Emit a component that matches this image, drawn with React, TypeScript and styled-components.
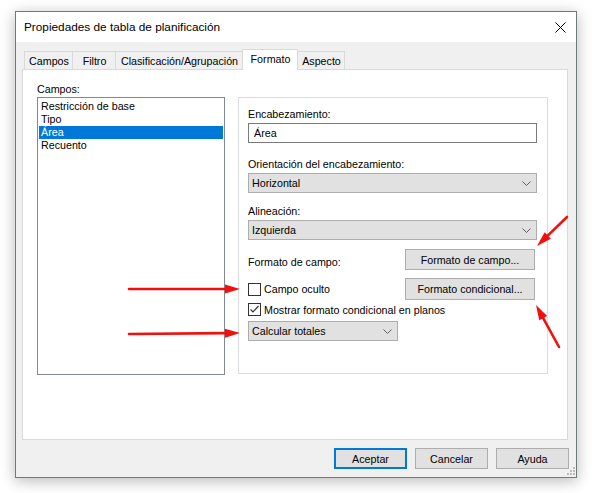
import styled, { createGlobalStyle } from "styled-components";

const GlobalStyle = createGlobalStyle`
  html, body {
    margin: 0;
    background: #ffffff;
  }
  body {
    font-family: "Liberation Sans", Arial, sans-serif;
    font-size: 10.7px;
    color: #000000;
  }
`;

const Page = styled.div`
  position: relative;
  width: 592px;
  height: 493px;
  padding: 11px 0 0 15px;
  box-sizing: border-box;
  overflow: hidden;
`;

const Window = styled.div`
  width: 562px;
  height: 467px;
  box-sizing: border-box;
  border: 1px solid #6f7a7a;
  background: #f0f0f0;
  box-shadow: 0 3px 14px rgba(0, 0, 0, 0.28);
  display: flex;
  flex-direction: column;
`;

const TitleBar = styled.div`
  height: 30px;
  background: #ffffff;
  display: flex;
  align-items: center;
  justify-content: space-between;
  padding: 0 10px 0 8px;
`;

const Title = styled.span`
  font-size: 11.8px;
`;

const TabBar = styled.div`
  height: 20px;
  margin: 7px 8px 0 6px;
  padding-left: 2px;
  display: flex;
  align-items: flex-end;
`;

const Tab = styled.div<{ $w: number; $active?: boolean }>`
  position: relative;
  width: ${(p) => p.$w}px;
  height: ${(p) => (p.$active ? 21 : 18)}px;
  box-sizing: border-box;
  margin-left: -1px;
  margin-bottom: ${(p) => (p.$active ? -1 : 0)}px;
  padding-bottom: ${(p) => (p.$active ? 2 : 0)}px;
  padding-left: 1px;
  border: 1px solid #d9d9d9;
  border-bottom: none;
  background: ${(p) => (p.$active ? "#ffffff" : "#f0f0f0")};
  z-index: ${(p) => (p.$active ? 1 : 0)};
  display: flex;
  align-items: center;
  justify-content: center;
  white-space: nowrap;

  &:first-child {
    margin-left: 0;
  }
`;

const Panel = styled.div`
  height: 371px;
  box-sizing: border-box;
  margin: 0 8px 0 6px;
  border: 1px solid #d9d9d9;
  background: #ffffff;
  padding: 11px 0 0 14px;
  display: grid;
  grid-template-columns: 188px 310px;
  grid-template-rows: 16px auto;
  column-gap: 13px;
`;

const Label = styled.div<{ $top?: number }>`
  line-height: 16px;
  margin-top: ${(p) => p.$top ?? 0}px;
  white-space: nowrap;
`;

const FieldList = styled.div`
  grid-column: 1;
  grid-row: 2;
  height: 278px;
  box-sizing: border-box;
  border: 1px solid #828790;
  padding: 2px 1px 1px;
`;

const ListItem = styled.div<{ $selected?: boolean }>`
  height: 13px;
  line-height: 13px;
  padding-left: 2px;
  background: ${(p) => (p.$selected ? "#0078d7" : "transparent")};
  color: ${(p) => (p.$selected ? "#ffffff" : "#000000")};
  white-space: nowrap;
`;

const GroupBox = styled.div`
  grid-column: 2;
  grid-row: 2;
  height: 277px;
  box-sizing: border-box;
  border: 1px solid #dcdcdc;
  padding: 8px 10px 0 9px;
  display: flex;
  flex-direction: column;
`;

const FieldLabel = styled(Label)`
  margin-bottom: 1px;
`;

const TextBox = styled.div`
  height: 20px;
  box-sizing: border-box;
  border: 1px solid #7a7a7a;
  padding-left: 5px;
  display: flex;
  align-items: center;
`;

const Select = styled.div<{ $w?: number }>`
  width: ${(p) => (p.$w ? `${p.$w}px` : "auto")};
  height: 20px;
  box-sizing: border-box;
  border: 1px solid #adadad;
  background: #e1e1e1;
  padding: 0 5px 0 3px;
  display: flex;
  align-items: center;
  justify-content: space-between;
`;

const Row = styled.div<{ $top: number; $h: number }>`
  height: ${(p) => p.$h}px;
  margin-top: ${(p) => p.$top}px;
  display: flex;
  align-items: center;
  justify-content: space-between;
`;

const RowLabel = styled.span`
  padding-top: 4px;
`;

const Button = styled.div<{ $w: number; $h?: number; $default?: boolean }>`
  width: ${(p) => p.$w}px;
  height: ${(p) => p.$h ?? 21}px;
  box-sizing: border-box;
  border: ${(p) => (p.$default ? "2px solid #0078d7" : "1px solid #adadad")};
  background: #e1e1e1;
  display: flex;
  align-items: center;
  justify-content: center;
  white-space: nowrap;
`;

const GroupButton = styled(Button)`
  margin-right: 2px;
`;

const CheckLine = styled.label<{ $top?: number }>`
  height: 13px;
  margin-top: ${(p) => p.$top ?? 0}px;
  display: flex;
  align-items: center;
  gap: 3px;
  white-space: nowrap;
`;

const CheckBox = styled.span`
  width: 13px;
  height: 13px;
  box-sizing: border-box;
  border: 1px solid #333333;
  background: #ffffff;
  display: flex;
  align-items: center;
  justify-content: center;
`;

const TotalsSelect = styled(Select)`
  margin-top: 5px;
`;

const Footer = styled.div`
  position: relative;
  margin-top: 8px;
  padding-right: 7px;
  display: flex;
  justify-content: flex-end;
  gap: 8px;
`;

const Grip = styled.svg`
  position: absolute;
  right: 1px;
  top: 19px;
`;

const Annotations = styled.svg`
  position: absolute;
  left: 0;
  top: 0;
  pointer-events: none;
`;

const Chevron = () => (
  <svg width="9" height="5" viewBox="0 0 9 5">
    <polyline points="0.5,0.5 4.5,4.5 8.5,0.5" fill="none" stroke="#606060" strokeWidth="1" />
  </svg>
);

const CloseIcon = () => (
  <svg width="11" height="11" viewBox="0 0 11 11">
    <path d="M0.5 0.5 L10.5 10.5 M10.5 0.5 L0.5 10.5" stroke="#000" strokeWidth="1" />
  </svg>
);

const CheckMark = () => (
  <svg width="11" height="11" viewBox="0 0 11 11">
    <polyline points="1.5,5.5 4,8 9.5,2" fill="none" stroke="#333" strokeWidth="1.2" />
  </svg>
);

// red arrow: shaft plus a filled head whose tip sits at (x2, y2)
const Arrow = ({ x1, y1, x2, y2 }: { x1: number; y1: number; x2: number; y2: number }) => {
  const a = Math.atan2(y2 - y1, x2 - x1);
  const len = 15;
  const half = 4.5;
  const bx = x2 - len * Math.cos(a);
  const by = y2 - len * Math.sin(a);
  const px = -Math.sin(a) * half;
  const py = Math.cos(a) * half;
  return (
    <g>
      <line x1={x1} y1={y1} x2={bx} y2={by} stroke="#f01010" strokeWidth="2.6" strokeLinecap="round" />
      <polygon points={`${x2},${y2} ${bx + px},${by + py} ${bx - px},${by - py}`} fill="#f01010" />
    </g>
  );
};

const tabs = [
  { label: "Campos", w: 49 },
  { label: "Filtro", w: 44 },
  { label: "Clasificación/Agrupación", w: 128 },
  { label: "Formato", w: 56, active: true },
  { label: "Aspecto", w: 48 },
];

const fields = ["Restricción de base", "Tipo", "Área", "Recuento"];

export default function App() {
  return (
    <>
      <GlobalStyle />
      <Page>
        <Window>
          <TitleBar>
            <Title>Propiedades de tabla de planificación</Title>
            <CloseIcon />
          </TitleBar>

          <TabBar>
            {tabs.map((t) => (
              <Tab key={t.label} $w={t.w} $active={t.active}>
                {t.label}
              </Tab>
            ))}
          </TabBar>

          <Panel>
            <Label>Campos:</Label>
            <FieldList>
              {fields.map((f) => (
                <ListItem key={f} $selected={f === "Área"}>
                  {f}
                </ListItem>
              ))}
            </FieldList>

            <GroupBox>
              <FieldLabel>Encabezamiento:</FieldLabel>
              <TextBox>Área</TextBox>

              <FieldLabel $top={13}>Orientación del encabezamiento:</FieldLabel>
              <Select>
                Horizontal
                <Chevron />
              </Select>

              <FieldLabel $top={10}>Alineación:</FieldLabel>
              <Select>
                Izquierda
                <Chevron />
              </Select>

              <Row $top={9} $h={21}>
                <RowLabel>Formato de campo:</RowLabel>
                <GroupButton $w={130}>Formato de campo...</GroupButton>
              </Row>

              <Row $top={8} $h={22}>
                <CheckLine>
                  <CheckBox />
                  Campo oculto
                </CheckLine>
                <GroupButton $w={130} $h={22}>
                  Formato condicional...
                </GroupButton>
              </Row>

              <CheckLine $top={3}>
                <CheckBox>
                  <CheckMark />
                </CheckBox>
                Mostrar formato condicional en planos
              </CheckLine>

              <TotalsSelect $w={150}>
                Calcular totales
                <Chevron />
              </TotalsSelect>
            </GroupBox>
          </Panel>

          <Footer>
            <Button $w={73} $default>
              Aceptar
            </Button>
            <Button $w={73}>Cancelar</Button>
            <Button $w={73}>Ayuda</Button>
            <Grip width="8" height="8" viewBox="0 0 8 8">
              <rect x="6" y="0" width="2" height="2" fill="#bdbdbd" />
              <rect x="3" y="3" width="2" height="2" fill="#bdbdbd" />
              <rect x="6" y="3" width="2" height="2" fill="#bdbdbd" />
              <rect x="0" y="6" width="2" height="2" fill="#bdbdbd" />
              <rect x="3" y="6" width="2" height="2" fill="#bdbdbd" />
              <rect x="6" y="6" width="2" height="2" fill="#bdbdbd" />
            </Grip>
          </Footer>
        </Window>

        <Annotations width="592" height="493" viewBox="0 0 592 493">
          <Arrow x1={129} y1={289} x2={240} y2={289} />
          <Arrow x1={129} y1={334} x2={240} y2={333} />
          <Arrow x1={567} y1={217} x2={537} y2={246} />
          <Arrow x1={559} y1={347} x2={536} y2={305} />
        </Annotations>
      </Page>
    </>
  );
}
